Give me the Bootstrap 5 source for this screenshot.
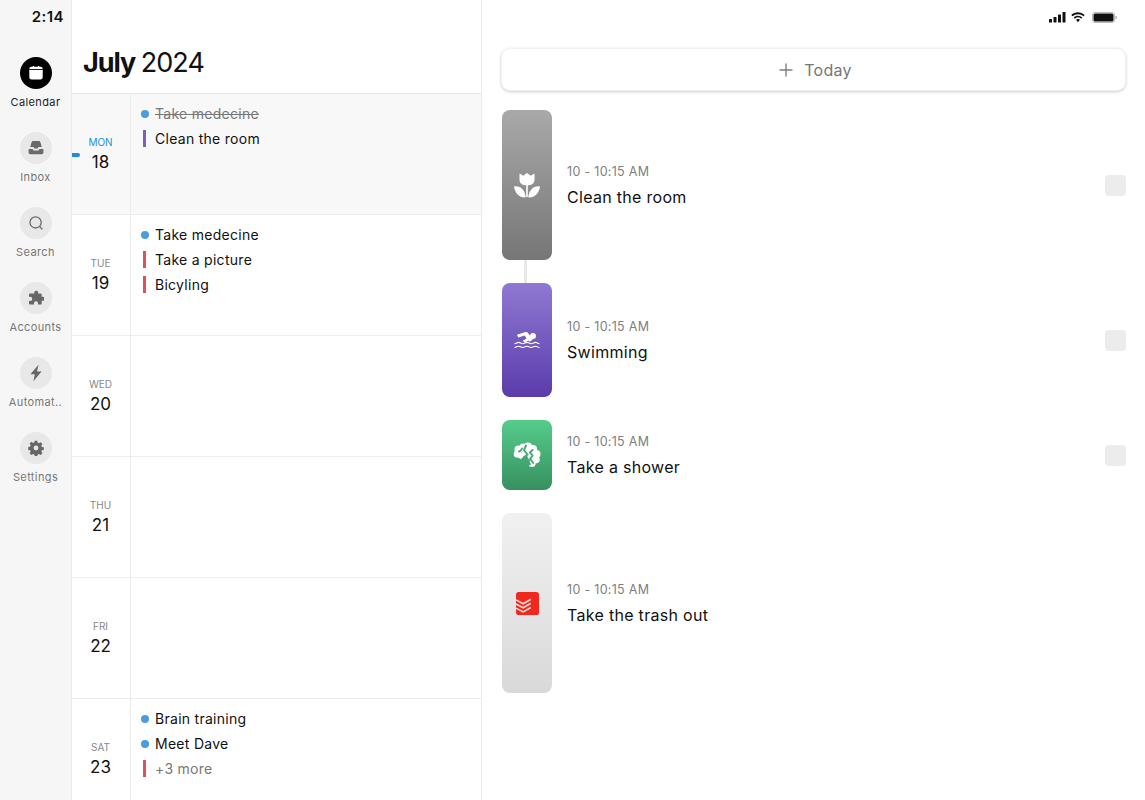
<!DOCTYPE html>
<html lang="en">
<head>
<meta charset="utf-8">
<title>July 2024</title>
<link rel="stylesheet" href="https://cdn.jsdelivr.net/npm/bootstrap@5.3.0/dist/css/bootstrap.min.css">
<style>
html,body{height:800px;overflow:hidden;background:#fff}
body{font-family:Inter,"Liberation Sans",sans-serif;color:#111}
.app-shell{height:800px}
.side-rail{width:72px;flex:none;background:#f6f6f6;border-right:1px solid #ebebeb;padding-top:8px}
.clock{font-size:15px;font-weight:600;line-height:18px;text-align:right;padding-right:7px;letter-spacing:.45px;margin-bottom:31px;color:#111}
.rail-item{height:75px;text-align:center;color:#777;font-size:11px;letter-spacing:.38px}
.rail-item.active{color:#222}
.rail-circle{width:32px;height:32px;border-radius:50%;background:#e8e8e8;margin:0 auto 5px;display:flex;align-items:center;justify-content:center}
.active .rail-circle{background:#000}
.cal-col{width:410px;flex:none;border-right:1px solid #ebebeb}
.cal-head{height:94px;padding:45px 0 0 11px;border-bottom:1px solid #e8e8e8;font-size:27px;line-height:36px;letter-spacing:-.95px;word-spacing:-1px;background:#fff}
.cal-head b{font-weight:700;letter-spacing:-1.1px}
.day-row{height:121px;border-bottom:1px solid #ededed;position:relative}
.day-row.today{background:#f8f8f8}
.day-num{width:59px;flex:none;border-right:1px solid #ededed;text-align:center;padding-top:42px;padding-right:1px}
.day-name{font-size:10px;line-height:12px;color:#888;text-transform:uppercase;height:14px}
.today .day-name{color:#1d8fd8}
.day-val{font-size:17px;line-height:25px;color:#111}
.now-tick{position:absolute;left:0;top:59px;width:8px;height:4px;background:#1d8fd8;border-radius:0 2px 2px 0}
.ev-list{padding:7px 0 0 10px}
.ev-line{height:25px;font-size:14px;letter-spacing:.28px;color:#111}
.ev-dot{width:8px;height:8px;border-radius:50%;background:#4a9be0;margin-right:6px;flex:none}
.ev-bar{width:3px;height:17px;margin:0 9px 0 2px;flex:none;background:#d9535b}
.ev-bar.violet{background:#7a63b4}
.ev-done{color:#777;text-decoration:line-through}
.ev-more{color:#777}
.detail{flex:1;min-width:0;padding:0 19px}
.status-icons{height:48px;padding:12px 9px 0 0;gap:5px}
.wifi-ico{margin-right:2px}
.today-btn{height:43px;width:100%;background:#fff;border:1px solid #f1f1f1;border-radius:9px;box-shadow:0 1px 3px rgba(0,0,0,.2);color:#777;font-size:16px;letter-spacing:.3px;gap:11px;padding-left:16px}
.today-btn:hover{background:#fff;color:#777}
.task-list{padding-top:19px;padding-left:1px}
.task-row{margin-bottom:23px;position:relative}
.task-pill{width:50px;flex:none;border-radius:8px;display:flex;align-items:center;justify-content:center}
.pill-grey{background:linear-gradient(#a9a9a9,#767676)}
.pill-violet{background:linear-gradient(#8f79d2,#5b3bab)}
.pill-green{background:linear-gradient(#56cc8b,#37905f)}
.pill-light{background:linear-gradient(#f1f1f1,#d9d9d9)}
.h150{height:150px}.h114{height:114px}.h70{height:70px}.h180{height:180px}
.task-link{position:absolute;left:22px;top:150px;width:3px;height:23px;background:#e8e8e8}
.task-body{padding-left:15px}
.task-time{font-size:12.5px;line-height:18px;color:#808080;letter-spacing:.3px;margin-top:1px;margin-bottom:5px}
.task-title{font-size:16px;line-height:22px;letter-spacing:.3px;color:#111}
.task-check{width:21px;height:21px;border-radius:4px;background:#ececec;flex:none}
</style>
</head>
<body>
<div class="app-shell d-flex">
  <nav class="side-rail">
    <div class="clock">2:14</div>
    <div class="rail-item active">
      <div class="rail-circle"><svg width="16" height="16" viewBox="0 0 16 16"><path fill="#fff" d="M3.500 1.800h1.200V1h1.500v.8h3.600V1h1.500v.8h1.200A2.200 2.200 0 0 1 14.700 4v8.300a2.200 2.200 0 0 1-2.200 2.200h-9a2.200 2.200 0 0 1-2.200-2.200V4a2.200 2.200 0 0 1 2.200-2.200z"/><rect x="1.300" y="4" width="13.400" height=".9" fill="#000"/></svg></div>
      Calendar
    </div>
    <div class="rail-item">
      <div class="rail-circle"><svg width="16" height="14" viewBox="0 0 16 14"><path fill="#6a6a6a" d="M3.600 1.200C3.900.5 4.500 0 5.300 0h5.400c.8 0 1.400.5 1.700 1.200L13.800 6H10.400L9.700 7.400H6.300L5.600 6H2.200z"/><path fill="#6a6a6a" d="M.6 8h4l.8 1.500h5.200l.8-1.500h4v3.600A1.600 1.600 0 0 1 13.800 13.200H2.200A1.600 1.600 0 0 1 .6 11.600z"/></svg></div>
      Inbox
    </div>
    <div class="rail-item">
      <div class="rail-circle"><svg width="16" height="16" viewBox="0 0 16 16" fill="none" stroke="#6a6a6a" stroke-width="1.300" stroke-linecap="round"><circle cx="7.600" cy="7.400" r="5.600"/><path d="M11.800 11.600l2.200 2.400"/></svg></div>
      Search
    </div>
    <div class="rail-item">
      <div class="rail-circle"><svg width="16" height="16" viewBox="0 0 16 16"><path fill="#666" d="M6.200 2.200a2.100 2.100 0 0 1 4 0c0 .5-.2.8-.3 1.200h2.800a1 1 0 0 1 1 1V7c.4-.2.7-.3 1.100-.3a2 2 0 0 1 0 4c-.4 0-.7-.1-1.100-.3v3a1 1 0 0 1-1 1h-2.900c.1-.4.3-.7.3-1.100a2.100 2.100 0 0 0-4.200 0c0 .4.2.7.3 1.100H2a1 1 0 0 1-1-1v-2.700c.4.2.8.3 1.200.3a2.100 2.100 0 0 0 0-4.200c-.4 0-.8.1-1.200.3V4.400a1 1 0 0 1 1-1h4.500c-.1-.4-.3-.7-.3-1.200z"/></svg></div>
      Accounts
    </div>
    <div class="rail-item">
      <div class="rail-circle"><svg width="16" height="18" viewBox="0 0 16 18"><path fill="#666" d="M10.600.8 2.400 10.200h4.500l-1.500 7 8.200-9.600H9z"/></svg></div>
      Automat..
    </div>
    <div class="rail-item">
      <div class="rail-circle"><svg width="16" height="16" viewBox="0 0 16 16"><path fill="#666" fill-rule="evenodd" d="M6.700.8h2.600l.4 2 1.100.5 1.800-1.100 1.800 1.800-1.100 1.800.5 1.100 2 .4v2.600l-2 .4-.5 1.100 1.100 1.800-1.800 1.800-1.800-1.100-1.100.5-.4 2H6.700l-.4-2-1.100-.5-1.800 1.100-1.800-1.800 1.100-1.800-.5-1.100-2-.4V6.900l2-.4.500-1.100-1.100-1.800 1.800-1.800 1.800 1.100 1.100-.5zM8 5.600a2.400 2.400 0 1 0 0 4.800 2.400 2.400 0 0 0 0-4.800z"/></svg></div>
      Settings
    </div>
  </nav>

  <section class="cal-col">
    <div class="cal-head"><b>July</b> 2024</div>
    <div class="day-row today d-flex">
      <span class="now-tick"></span>
      <div class="day-num"><div class="day-name">Mon</div><div class="day-val">18</div></div>
      <div class="ev-list flex-grow-1">
        <div class="ev-line d-flex align-items-center"><span class="ev-dot"></span><span class="ev-done">Take medecine</span></div>
        <div class="ev-line d-flex align-items-center"><span class="ev-bar violet"></span>Clean the room</div>
      </div>
    </div>
    <div class="day-row d-flex">
      <div class="day-num"><div class="day-name">Tue</div><div class="day-val">19</div></div>
      <div class="ev-list flex-grow-1">
        <div class="ev-line d-flex align-items-center"><span class="ev-dot"></span>Take medecine</div>
        <div class="ev-line d-flex align-items-center"><span class="ev-bar"></span>Take a picture</div>
        <div class="ev-line d-flex align-items-center"><span class="ev-bar"></span>Bicyling</div>
      </div>
    </div>
    <div class="day-row d-flex">
      <div class="day-num"><div class="day-name">Wed</div><div class="day-val">20</div></div>
      <div class="ev-list flex-grow-1"></div>
    </div>
    <div class="day-row d-flex">
      <div class="day-num"><div class="day-name">Thu</div><div class="day-val">21</div></div>
      <div class="ev-list flex-grow-1"></div>
    </div>
    <div class="day-row d-flex">
      <div class="day-num"><div class="day-name">Fri</div><div class="day-val">22</div></div>
      <div class="ev-list flex-grow-1"></div>
    </div>
    <div class="day-row d-flex">
      <div class="day-num"><div class="day-name">Sat</div><div class="day-val">23</div></div>
      <div class="ev-list flex-grow-1">
        <div class="ev-line d-flex align-items-center"><span class="ev-dot"></span>Brain training</div>
        <div class="ev-line d-flex align-items-center"><span class="ev-dot"></span>Meet Dave</div>
        <div class="ev-line d-flex align-items-center ev-more"><span class="ev-bar"></span>+3 more</div>
      </div>
    </div>
  </section>

  <main class="detail">
    <div class="status-icons d-flex justify-content-end align-items-start">
      <svg width="17" height="11" viewBox="0 0 17 11" fill="#111"><rect x="0" y="7" width="3" height="3.500" rx=".5"/><rect x="4.500" y="5" width="3" height="5.500" rx=".5"/><rect x="9" y="2.500" width="3" height="8" rx=".5"/><rect x="13.500" y="0" width="3" height="10.500" rx=".5"/></svg>
      <svg class="wifi-ico" width="14" height="11" viewBox="0 0 15 11" fill="#111"><path d="M7.500 0C4.700 0 2.200 1 .3 2.800l1.300 1.400A8.600 8.600 0 0 1 7.500 2c2.300 0 4.300.8 5.900 2.200l1.300-1.400A10.700 10.700 0 0 0 7.500 0z"/><path d="M7.500 3.600c-1.800 0-3.400.7-4.600 1.800l1.300 1.400a4.800 4.800 0 0 1 6.600 0l1.300-1.400a6.700 6.700 0 0 0-4.600-1.800z"/><path d="M7.500 7.200c-.8 0-1.500.3-2.100.8l2.100 2.600L9.600 8c-.6-.5-1.300-.8-2.100-.8z"/></svg>
      <svg width="25" height="11" viewBox="0 0 25 11"><rect x=".5" y=".5" width="22" height="10" rx="2.500" fill="#fff" stroke="#bbb"/><rect x="1.500" y="1.500" width="20" height="8" rx="1.500" fill="#111"/><rect x="23.400" y="3.800" width="1.300" height="3.400" rx=".6" fill="#aaa"/></svg>
    </div>
    <button type="button" class="btn today-btn d-flex align-items-center justify-content-center">
      <svg width="14" height="14" viewBox="0 0 14 14" stroke="#808080" stroke-width="1.400" stroke-linecap="round"><path d="M7 1v12M1 7h12"/></svg>Today
    </button>
    <div class="task-list">
      <div class="task-row d-flex align-items-center">
        <div class="task-pill pill-grey h150"><svg width="26" height="25" viewBox="0 0 26 25" fill="#fff"><path d="M5.500.5l3.800 2.300L13 0l3.700 2.800L20.500.5v6.300c0 3.700-3.200 5.700-7.500 5.700s-7.500-2-7.500-5.700z"/><rect x="12.200" y="12" width="1.600" height="12"/><path d="M0 13.500c5-.8 10.500 1.800 11.800 10.800C6 25 1 21 0 13.500z"/><path d="M26 13.500c-5-.8-10.500 1.800-11.800 10.800C20 25 25 21 26 13.500z"/></svg></div>
        <div class="task-body flex-grow-1"><div class="task-time">10 - 10:15 AM</div><div class="task-title">Clean the room</div></div>
        <div class="task-check"></div>
        <span class="task-link"></span>
      </div>
      <div class="task-row d-flex align-items-center">
        <div class="task-pill pill-violet h114"><svg width="26" height="19" viewBox="0 0 26 19" fill="#fff"><circle cx="19" cy="5" r="3"/><path d="M3 3.800 11.500 1c1-.3 1.900 0 2.400.8l4.800 6.700-2.800 2.200-1.600-1.300-3.300 2L8.500 10l4-2.500L10.800 4.600 4.200 6.500z"/><path fill="none" stroke="#fff" stroke-width="1.100" d="M.5 12.700c2 0 2.200-1.300 4.100-1.300s2.100 1.300 4.200 1.300 2.200-1.300 4.200-1.300 2.100 1.300 4.200 1.300 2.200-1.300 4.200-1.300 2.100 1.300 4.100 1.300M.5 16.500c2 0 2.200-1.300 4.100-1.300s2.100 1.300 4.200 1.300 2.200-1.300 4.200-1.300 2.100 1.300 4.200 1.300 2.200-1.300 4.200-1.300 2.100 1.300 4.100 1.300"/></svg></div>
        <div class="task-body flex-grow-1"><div class="task-time">10 - 10:15 AM</div><div class="task-title">Swimming</div></div>
        <div class="task-check"></div>
      </div>
      <div class="task-row d-flex align-items-center">
        <div class="task-pill pill-green h70"><svg width="28" height="26" viewBox="0 0 28 26"><g fill="#fff"><circle cx="5.500" cy="7.500" r="4"/><circle cx="4.500" cy="12" r="3.800"/><circle cx="9" cy="14" r="3.300"/><circle cx="10" cy="5" r="3.500"/><circle cx="15" cy="4.500" r="4"/><circle cx="20" cy="7" r="4"/><circle cx="23.500" cy="12" r="4"/><circle cx="23" cy="17.500" r="3.800"/><circle cx="19" cy="21.500" r="3.600"/><circle cx="15" cy="11" r="6"/><circle cx="20" cy="14" r="5"/></g><path fill="none" stroke="#45a874" stroke-width="1.900" stroke-linecap="round" d="M6 9.500c1.500-.5 2.500-1.500 3-3M13 3.500 11 8l3.500 4.500-3.800 2.800M19.500 8l-2.500 2.500 2.500 3-2.300 3.200 3 4.300"/><path fill="#45a874" d="M8 16.500l6-3 4 9-3.500 2z"/></svg></div>
        <div class="task-body flex-grow-1"><div class="task-time">10 - 10:15 AM</div><div class="task-title">Take a shower</div></div>
        <div class="task-check"></div>
      </div>
      <div class="task-row d-flex align-items-center">
        <div class="task-pill pill-light h180"><svg width="23" height="23" viewBox="0 0 24 24"><rect width="24" height="24" rx="3" fill="#f0281e"/><path fill="none" stroke="#ffd9d4" stroke-width="1.700" d="M0 8.200l7.500 4L15.500 7.500M0 12.500l7.500 4 8-4.700M0 16.800l7.500 4 8-4.700"/></svg></div>
        <div class="task-body flex-grow-1"><div class="task-time">10 - 10:15 AM</div><div class="task-title">Take the trash out</div></div>
      </div>
    </div>
  </main>
</div>
<script src="https://cdn.jsdelivr.net/npm/bootstrap@5.3.0/dist/js/bootstrap.bundle.min.js"></script>
</body>
</html>
